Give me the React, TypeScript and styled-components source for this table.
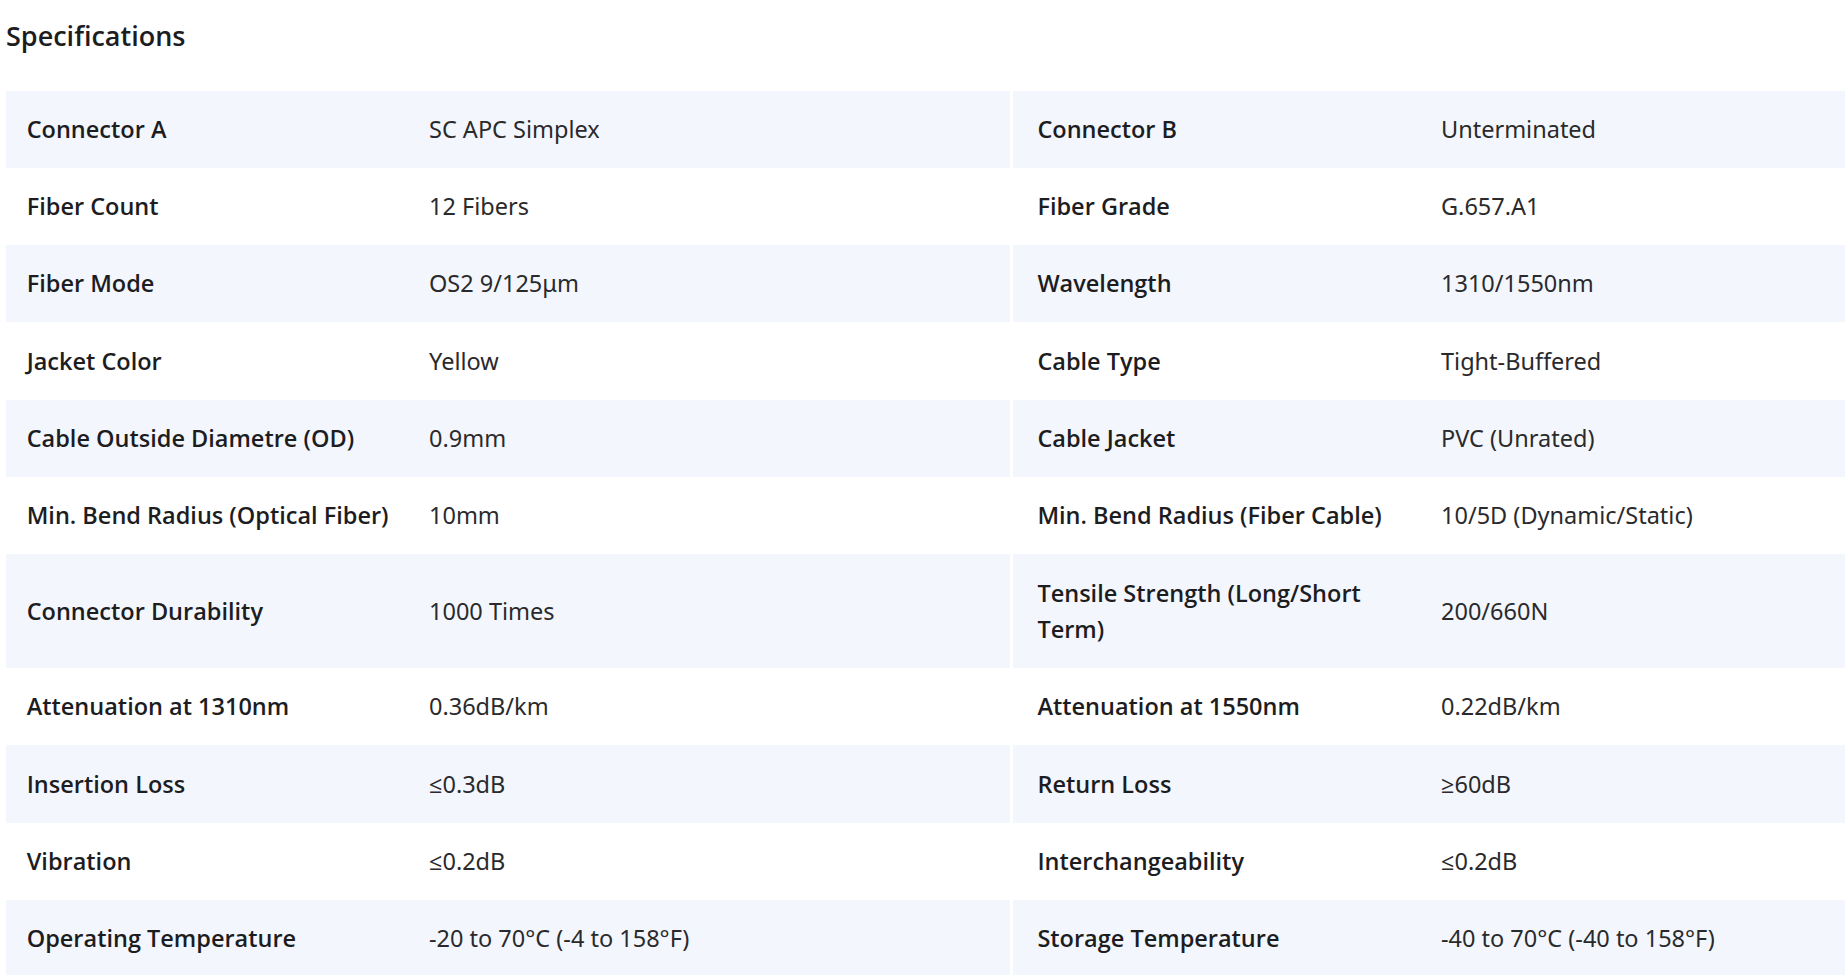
import React from "react";
import styled, { createGlobalStyle } from "styled-components";

const GlobalStyle = createGlobalStyle`
  html, body {
    margin: 0;
    padding: 0;
    background: #ffffff;
    overflow: hidden;
  }
  body {
    font-family: "Noto Sans", "Open Sans", "Liberation Sans", sans-serif;
    color: #1d1d1f;
    -webkit-font-smoothing: antialiased;
  }
`;

const Page = styled.main`
  padding: 16px 0 0 6px;
`;

const Title = styled.h2`
  margin: 0 0 34.5px 0;
  font-family: "Open Sans", "Noto Sans", sans-serif;
  font-size: 27px;
  line-height: 40px;
  font-weight: 600;
  color: #1d1d1f;
`;

const Table = styled.div`
  display: flex;
  flex-direction: column;
`;

const Row = styled.div`
  display: grid;
  grid-template-columns: 1004px 1fr;
  column-gap: 3px;
`;

const Half = styled.div<{ $striped: boolean; $labelWidth: number }>`
  display: grid;
  grid-template-columns: ${(p) => p.$labelWidth}px 1fr;
  align-items: center;
  background: ${(p) => (p.$striped ? "#f3f7fd" : "#ffffff")};
`;

const Label = styled.div<{ $padLeft: number }>`
  padding: 20.4px 10px 20.4px ${(p) => p.$padLeft}px;
  font-family: "Open Sans", "Noto Sans", sans-serif;
  font-size: 23.5px;
  line-height: 36.5px;
  font-weight: 600;
  color: #1d1d1f;
`;

const Value = styled.div`
  padding: 20.4px 21px;
  font-size: 23.5px;
  line-height: 36.5px;
  font-weight: 400;
  color: #2a2a2c;
`;

type Spec = [string, string, string, string];

const specs: Spec[] = [
  ["Connector A", "SC APC Simplex", "Connector B", "Unterminated"],
  ["Fiber Count", "12 Fibers", "Fiber Grade", "G.657.A1"],
  ["Fiber Mode", "OS2 9/125μm", "Wavelength", "1310/1550nm"],
  ["Jacket Color", "Yellow", "Cable Type", "Tight-Buffered"],
  ["Cable Outside Diametre (OD)", "0.9mm", "Cable Jacket", "PVC (Unrated)"],
  [
    "Min. Bend Radius (Optical Fiber)",
    "10mm",
    "Min. Bend Radius (Fiber Cable)",
    "10/5D (Dynamic/Static)",
  ],
  [
    "Connector Durability",
    "1000 Times",
    "Tensile Strength (Long/Short Term)",
    "200/660N",
  ],
  ["Attenuation at 1310nm", "0.36dB/km", "Attenuation at 1550nm", "0.22dB/km"],
  ["Insertion Loss", "≤0.3dB", "Return Loss", "≥60dB"],
  ["Vibration", "≤0.2dB", "Interchangeability", "≤0.2dB"],
  [
    "Operating Temperature",
    "-20 to 70°C (-4 to 158°F)",
    "Storage Temperature",
    "-40 to 70°C (-40 to 158°F)",
  ],
];

export default function App() {
  return (
    <>
      <GlobalStyle />
      <Page>
        <Title>Specifications</Title>
        <Table>
          {specs.map(([la, va, lb, vb], i) => {
            const striped = i % 2 === 0;
            return (
              <Row key={la}>
                <Half $striped={striped} $labelWidth={402}>
                  <Label $padLeft={20.7}>{la}</Label>
                  <Value>{va}</Value>
                </Half>
                <Half $striped={striped} $labelWidth={407}>
                  <Label $padLeft={24.4}>{lb}</Label>
                  <Value>{vb}</Value>
                </Half>
              </Row>
            );
          })}
        </Table>
      </Page>
    </>
  );
}
